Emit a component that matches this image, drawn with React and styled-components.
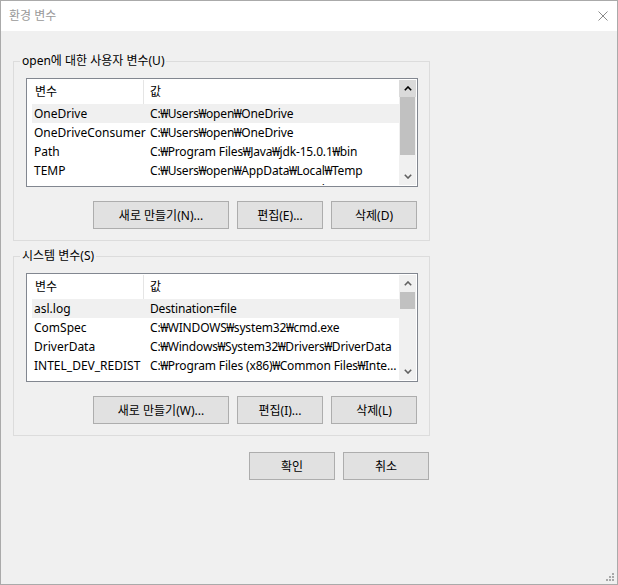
import React from "react";
import styled, { createGlobalStyle } from "styled-components";

const GlobalStyle = createGlobalStyle`
  html, body {
    margin: 0;
    padding: 0;
  }
  body {
    background: #f0f0f0;
    font-family: "Noto Sans", "Noto Sans CJK KR", sans-serif;
    font-size: 12px;
    color: #000;
  }
`;

const userVars = [
  ["OneDrive", "C:₩Users₩open₩OneDrive"],
  ["OneDriveConsumer", "C:₩Users₩open₩OneDrive"],
  ["Path", "C:₩Program Files₩Java₩jdk-15.0.1₩bin"],
  ["TEMP", "C:₩Users₩open₩AppData₩Local₩Temp"],
  ["TMP", "C:₩Users₩open₩AppData₩Local₩Temp"],
];

const systemVars = [
  ["asl.log", "Destination=file"],
  ["ComSpec", "C:₩WINDOWS₩system32₩cmd.exe"],
  ["DriverData", "C:₩Windows₩System32₩Drivers₩DriverData"],
  ["INTEL_DEV_REDIST", "C:₩Program Files (x86)₩Common Files₩Intel₩Shared Libraries₩"],
  ["NUMBER_OF_PROCESSORS", "8"],
];

// the Korean UI font draws the backslash as a narrow ₩
function PathText({ text }) {
  const parts = text.split("₩");
  return parts.map((part, i) => (
    <React.Fragment key={i}>
      {part}
      {i < parts.length - 1 && <Won>₩</Won>}
    </React.Fragment>
  ));
}

export default function App() {
  return (
    <>
      <GlobalStyle />
      <Window>
        <TitleBar>
          <Title>환경 변수</Title>
          <CloseIcon width="10" height="10" viewBox="0 0 10 10">
            <path d="M0.5 0.5 L9.5 9.5 M9.5 0.5 L0.5 9.5" />
          </CloseIcon>
        </TitleBar>

        <Body>
          <GroupBox>
            <Legend>open에 대한 사용자 변수(U)</Legend>
            <GroupInner>
              <VarList rows={userVars} thumb={58} hotUp />
              <ButtonRow>
                <Button $w={136}>새로 만들기(N)...</Button>
                <Button>편집(E)...</Button>
                <Button>삭제(D)</Button>
              </ButtonRow>
            </GroupInner>
          </GroupBox>

          <GroupBox $top={7}>
            <Legend>시스템 변수(S)</Legend>
            <GroupInner>
              <VarList rows={systemVars} thumb={17} />
              <ButtonRow>
                <Button $w={136}>새로 만들기(W)...</Button>
                <Button>편집(I)...</Button>
                <Button>삭제(L)</Button>
              </ButtonRow>
            </GroupInner>
          </GroupBox>

          <DialogButtons>
            <Button>확인</Button>
            <Button>취소</Button>
          </DialogButtons>
        </Body>

        <Grip width="9" height="9" viewBox="0 0 9 9">
          <rect x="7" y="0" width="2" height="2" />
          <rect x="4" y="3" width="2" height="2" />
          <rect x="7" y="3" width="2" height="2" />
          <rect x="1" y="6" width="2" height="2" />
          <rect x="4" y="6" width="2" height="2" />
          <rect x="7" y="6" width="2" height="2" />
        </Grip>
      </Window>
    </>
  );
}

function VarList({ rows, thumb, hotUp }) {
  return (
    <ListBox>
      <ListContent>
        <Header>
          <HeadCell $first>변수</HeadCell>
          <HeadCell>값</HeadCell>
        </Header>
        {rows.map(([name, value], i) => (
          <Row key={name} $hot={i === 0}>
            <NameCell>{name}</NameCell>
            <ValueCell>
              <PathText text={value} />
            </ValueCell>
          </Row>
        ))}
      </ListContent>
      <ScrollBar>
        <ScrollBtn $hot={hotUp}>
          <svg width="8" height="5" viewBox="0 0 8 5">
            <path d="M0.8 4.2 L4 1 L7.2 4.2" />
          </svg>
        </ScrollBtn>
        <Track>
          <Thumb style={{ height: thumb }} />
        </Track>
        <ScrollBtn>
          <svg width="8" height="5" viewBox="0 0 8 5">
            <path d="M0.8 0.8 L4 4 L7.2 0.8" />
          </svg>
        </ScrollBtn>
      </ScrollBar>
    </ListBox>
  );
}

const Window = styled.div`
  position: relative;
  width: 618px;
  height: 585px;
  box-sizing: border-box;
  border: 1px solid #aaaaaa;
  background: #f0f0f0;
  display: flex;
  flex-direction: column;
`;

const TitleBar = styled.div`
  height: 30px;
  flex-shrink: 0;
  background: #fff;
  display: flex;
  align-items: center;
  justify-content: space-between;
  padding: 0 9px 0 8px;
`;

const Title = styled.div`
  color: #999999;
  font-size: 12px;
  line-height: 16px;
`;

const CloseIcon = styled.svg`
  path {
    stroke: #8a8a8a;
    stroke-width: 1;
    fill: none;
  }
`;

const Body = styled.div`
  display: flex;
  flex-direction: column;
  align-items: flex-start;
  padding: 22px 0 0 12px;
`;

const GroupBox = styled.fieldset`
  margin: ${(p) => p.$top || 0}px 0 0 0;
  padding: 0;
  min-width: 0;
  width: 417px;
  box-sizing: border-box;
  border: 1px solid #dcdcdc;
`;

const Legend = styled.legend`
  margin-left: 6px;
  padding: 0 2px;
  font-size: 12px;
  line-height: 16px;
  color: #000;
`;

const GroupInner = styled.div`
  padding: 9px 11px 11px 12px;
  display: flex;
  flex-direction: column;
`;

const ListBox = styled.div`
  width: 392px;
  height: 109px;
  box-sizing: border-box;
  border: 1px solid #828790;
  padding: 1px;
  background: #fff;
  display: flex;
`;

const ListContent = styled.div`
  flex: 1;
  min-width: 0;
  overflow: hidden;
`;

const Header = styled.div`
  height: 24px;
  display: flex;
  align-items: stretch;
`;

const HeadCell = styled.div`
  box-sizing: border-box;
  display: flex;
  align-items: center;
  width: ${(p) => (p.$first ? "116px" : "auto")};
  flex: ${(p) => (p.$first ? "none" : "1")};
  padding-left: ${(p) => (p.$first ? "7px" : "6px")};
  border-right: ${(p) => (p.$first ? "1px solid #e5e5e5" : "none")};
  line-height: 16px;
`;

const Row = styled.div`
  height: 19px;
  margin-left: 4px;
  display: flex;
  align-items: center;
  background: ${(p) => (p.$hot ? "#f0f0f0" : "transparent")};
  white-space: nowrap;
`;

const NameCell = styled.div`
  width: 118px;
  flex: none;
  box-sizing: border-box;
  padding-left: 2px;
  overflow: hidden;
  text-overflow: ellipsis;
`;

const ValueCell = styled.div`
  flex: 1;
  min-width: 0;
  padding-right: 2px;
  overflow: hidden;
  text-overflow: ellipsis;
  letter-spacing: -0.15px;
`;

const Won = styled.span`
  margin: 0 -0.4px;
`;

const ScrollBar = styled.div`
  width: 17px;
  flex: none;
  background: #f0f0f0;
  display: flex;
  flex-direction: column;
`;

const ScrollBtn = styled.div`
  height: 17px;
  flex: none;
  display: flex;
  align-items: center;
  justify-content: center;
  background: ${(p) => (p.$hot ? "#dadada" : "#f0f0f0")};

  path {
    fill: none;
    stroke: ${(p) => (p.$hot ? "#000" : "#606060")};
    stroke-width: 1.6;
  }
`;

const Track = styled.div`
  flex: 1;
  padding: 0 1px;
`;

const Thumb = styled.div`
  background: #c1c1c1;
`;

const ButtonRow = styled.div`
  display: flex;
  justify-content: flex-end;
  gap: 8px;
  margin-top: 14px;
  padding-right: 1px;
`;

const Button = styled.button`
  width: ${(p) => p.$w || 86}px;
  height: 28px;
  box-sizing: border-box;
  margin: 0;
  padding: 0;
  border: 1px solid #adadad;
  background: #e1e1e1;
  font-family: "Noto Sans", "Noto Sans CJK KR", sans-serif;
  font-size: 12px;
  color: #000;
`;

const DialogButtons = styled.div`
  width: 417px;
  display: flex;
  justify-content: flex-end;
  gap: 8px;
  margin-top: 16px;
  padding-right: 1px;
  box-sizing: border-box;
`;

const Grip = styled.svg`
  position: absolute;
  right: 3px;
  bottom: 2px;

  rect {
    fill: #a8a8a8;
  }
`;
